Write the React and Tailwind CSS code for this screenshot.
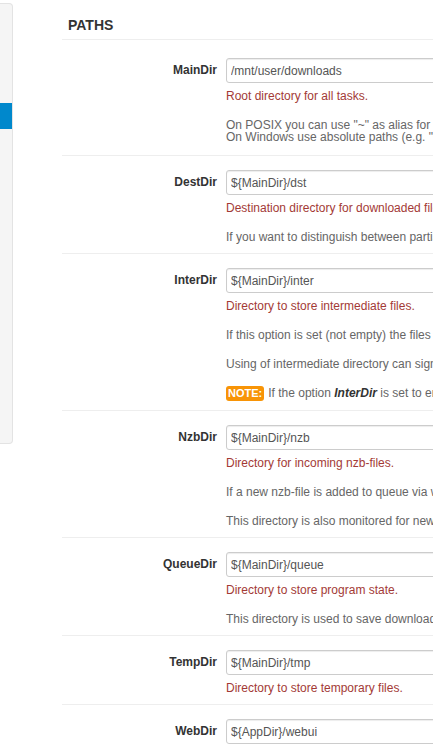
import { useState } from "react"

const options = [
  {
    name: "MainDir",
    value: "/mnt/user/downloads",
    title: "Root directory for all tasks.",
    help: [
      [
        'On POSIX you can use "~" as alias for home directory (e.g. "~/downloads").',
        'On Windows use absolute paths (e.g. "C:\\Downloads").',
      ],
    ],
  },
  {
    name: "DestDir",
    value: "${MainDir}/dst",
    title: "Destination directory for downloaded files.",
    help: [
      ["If you want to distinguish between partially downloaded files and completed downloads, use also option InterDir."],
    ],
  },
  {
    name: "InterDir",
    value: "${MainDir}/inter",
    title: "Directory to store intermediate files.",
    help: [
      ["If this option is set (not empty) the files are downloaded into this directory first. After successful download of nzb-file (possibly after par-repair) the files are moved to destination directory (option DestDir)."],
      ["Using of intermediate directory can significantly improve unpack performance if you can put intermediate directory (option InterDir) and destination directory (option DestDir) on separate physical hard drives."],
    ],
    note: true,
  },
  {
    name: "NzbDir",
    value: "${MainDir}/nzb",
    title: "Directory for incoming nzb-files.",
    help: [
      ["If a new nzb-file is added to queue via web-interface or RPC-API, it is saved into this directory and then processed by pre-processing script (option ScanScript)."],
      ["This directory is also monitored for new nzb-files. If a new file is found it is added to download queue."],
    ],
  },
  {
    name: "QueueDir",
    value: "${MainDir}/queue",
    title: "Directory to store program state.",
    help: [
      ["This directory is used to save download queue, history, information about fetched RSS feeds, statistics, etc."],
    ],
  },
  {
    name: "TempDir",
    value: "${MainDir}/tmp",
    title: "Directory to store temporary files.",
    help: [],
  },
  {
    name: "WebDir",
    value: "${AppDir}/webui",
    title: "Directory with web-interface files.",
    help: [],
  },
]

const OptionRow = ({ option, first }) => {
  const [value, setValue] = useState(option.value)

  return (
    <div className={`flex border-b border-[#eeeeee] ${first ? "pt-[18px] pb-[12px]" : "pt-[14px] pb-[10px]"}`}>
      <label className="w-[155px] shrink-0 text-right text-[12px] font-bold leading-[25px] text-[#333333]">
        {option.name}
      </label>
      <div className="ml-[9px] w-[640px] shrink-0">
        <input
          className="block h-[25px] w-[420px] rounded-[3px] border border-[#cccccc] bg-white px-[4px] text-[12px] text-[#555555] shadow-[inset_0_1px_1px_rgba(0,0,0,0.075)] outline-none"
          value={value}
          onChange={(e) => setValue(e.target.value)}
        />
        <p className="mt-[7px] whitespace-nowrap text-[12px] leading-[12px] text-[#a33a36]">{option.title}</p>
        {option.help.map((lines, idx) => (
          <p key={idx} className="mt-[17px] whitespace-nowrap text-[12px] leading-[12px] text-[#666666]">
            {lines.map((line, i) => (
              <span key={i} className="block">{line}</span>
            ))}
          </p>
        ))}
        {option.note && (
          <p className="mt-[17px] flex h-[13px] items-center whitespace-nowrap text-[12px] leading-[13px] text-[#666666]">
            <span className="mr-[4px] rounded-[3px] bg-[#f89406] px-[2px] text-[11px] font-bold leading-[15px] text-white">
              NOTE:
            </span>
            If the option&nbsp;<b className="italic text-[#333333]">InterDir</b>&nbsp;is set to empty value the downloaded files are put directly to destination directory (option DestDir).
          </p>
        )}
      </div>
    </div>
  )
}

const App = () => {
  return (
    <div className="flex h-[750px] w-full overflow-hidden bg-white font-['Liberation_Sans',Arial,sans-serif]">
      {/* Sidebar (mostly scrolled off to the left) */}
      <div className="mt-[3px] h-[441px] w-[13px] shrink-0 rounded-r-[4px] border border-l-0 border-[#e3e3e3] bg-[#f5f5f5] pt-[99px]">
        <div className="h-[26px] w-[12px] bg-[#0088cc]"></div>
      </div>

      {/* Config section */}
      <div className="ml-[49px] min-w-0 flex-1">
        <h4 className="h-[40px] border-b border-[#eeeeee] pl-[6px] pt-[15px] text-[14px] font-bold leading-[20px] text-[#333333]">
          PATHS
        </h4>
        {options.map((option, index) => (
          <OptionRow key={option.name} option={option} first={index === 0} />
        ))}
      </div>
    </div>
  )
}

export default App
